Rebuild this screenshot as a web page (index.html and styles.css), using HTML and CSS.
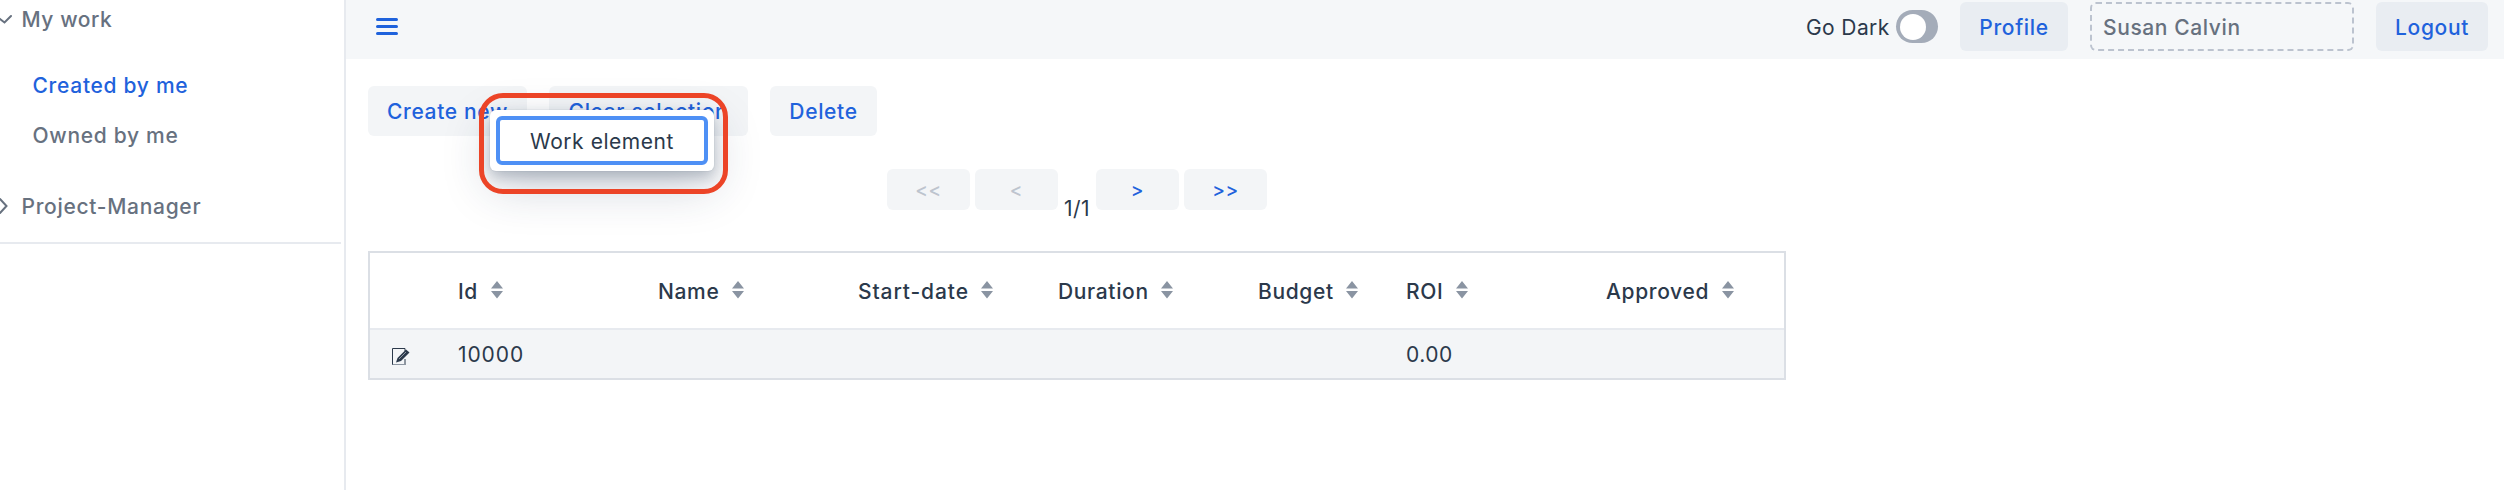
FILE: index.html
```
<!DOCTYPE html>
<html lang="en">
<head>
<meta charset="utf-8">
<title>My work</title>
<link rel="stylesheet" href="styles.css">
</head>
<body>
<div class="app">
  <nav class="drawer">
    <div class="group group-open">
      <svg class="chev" viewBox="0 0 14 20"><path d="M-4 6 L4.5 12.5 L11 6"/></svg>
      <span>My work</span>
    </div>
    <div class="links">
      <a class="link active">Created by me</a>
      <a class="link">Owned by me</a>
    </div>
    <div class="group group-closed">
      <svg class="chev" viewBox="0 0 14 20"><path d="M0 3 L6.5 10 L0 17"/></svg>
      <span>Project-Manager</span>
    </div>
  </nav>
  <div class="main">
    <header class="topbar">
      <svg class="menu-icon" viewBox="0 0 22 17"><path d="M1.5 1.5H20.5M1.5 8.5H20.5M1.5 15.5H20.5"/></svg>
      <div class="session">
        <label class="dark"><span class="dark-text">Go Dark</span><span class="toggle"><span class="knob"></span></span></label>
        <button class="btn top profile">Profile</button>
        <div class="user">Susan Calvin</div>
        <button class="btn top logout">Logout</button>
      </div>
    </header>
    <section class="content">
      <div class="toolbar">
        <button class="btn create">Create new</button>
        <button class="btn clear">Clear selection</button>
        <button class="btn delete">Delete</button>
        <div class="highlight"></div>
        <div class="popup"><div class="item">Work element</div></div>
      </div>
      <div class="pager">
        <button class="btn page off">&lt;&lt;</button>
        <button class="btn page off">&lt;</button>
        <span class="count">1/1</span>
        <button class="btn page">&gt;</button>
        <button class="btn page">&gt;&gt;</button>
      </div>
      <div class="grid">
        <div class="row head">
          <span></span>
          <span class="cell">Id<svg class="sort" viewBox="0 0 12 18"><path d="M0 7.5L6 0L12 7.5ZM0 10L6 17.5L12 10Z"/></svg></span>
          <span class="cell">Name<svg class="sort" viewBox="0 0 12 18"><path d="M0 7.5L6 0L12 7.5ZM0 10L6 17.5L12 10Z"/></svg></span>
          <span class="cell start">Start-date<svg class="sort" viewBox="0 0 12 18"><path d="M0 7.5L6 0L12 7.5ZM0 10L6 17.5L12 10Z"/></svg></span>
          <span class="cell">Duration<svg class="sort" viewBox="0 0 12 18"><path d="M0 7.5L6 0L12 7.5ZM0 10L6 17.5L12 10Z"/></svg></span>
          <span class="cell">Budget<svg class="sort" viewBox="0 0 12 18"><path d="M0 7.5L6 0L12 7.5ZM0 10L6 17.5L12 10Z"/></svg></span>
          <span class="cell">ROI<svg class="sort" viewBox="0 0 12 18"><path d="M0 7.5L6 0L12 7.5ZM0 10L6 17.5L12 10Z"/></svg></span>
          <span class="cell">Approved<svg class="sort" viewBox="0 0 12 18"><path d="M0 7.5L6 0L12 7.5ZM0 10L6 17.5L12 10Z"/></svg></span>
        </div>
        <div class="row body">
          <span class="cell edit"><svg viewBox="0 0 18 18"><path class="sheet" d="M13 11V17M.5 17V.5H13V3"/><path class="sheet-base" d="M.5 16.5H13"/><path class="pencil" d="M4 14.5L5.5 10L14 1.5L17.5 4.5L9 13Z"/><path class="shine" d="M7 11L14 4"/></svg></span>
          <span class="cell id">10000</span>
          <span></span><span></span><span></span><span></span>
          <span class="cell">0.00</span>
          <span></span>
        </div>
      </div>
    </section>
  </div>
</div>
</body>
</html>
```
FILE: styles.css
```
* { box-sizing: border-box; }
body { margin: 0; background: #fff; color: #2b394b; font-family: Inter, "Noto Sans", sans-serif; font-size: 21px; line-height: 30px; letter-spacing: .5px; }
.app { display: flex; height: 490px; overflow: hidden; }
.drawer { width: 346px; flex: none; border-right: 2px solid #e7eaef; color: #67717f; font-weight: 450; letter-spacing: .7px; }
.group { display: flex; align-items: center; gap: 7.5px; }
.group span { padding-top: 2px; }
.group-open { height: 39px; }
.group-open span { padding-top: 1px; letter-spacing: .55px; }
.group-closed { height: 75px; width: 341px; border-bottom: 2px solid #e7eaef; }
.chev { width: 14px; height: 20px; fill: none; stroke: #67717f; stroke-width: 2; stroke-linecap: round; }
.links { height: 130px; padding: 22px 0 0 32.5px; }
.link { display: block; height: 50px; line-height: 50px; }
.link.active { color: #1f62dc; }
.main { flex: 1; min-width: 0; }
.topbar { height: 59px; background: #f5f7f9; display: flex; justify-content: space-between; align-items: flex-start; padding: 2px 16px 0 30px; }
.menu-icon { width: 22px; height: 17px; margin-top: 16px; fill: none; stroke: #1f62dc; stroke-width: 3; stroke-linecap: round; }
.session { display: flex; gap: 22px; align-items: flex-start; }
.dark { display: flex; align-items: center; height: 49px; justify-content: space-between; width: 132px; }
.dark-text { padding-top: 2px; letter-spacing: .4px; }
.toggle { width: 42px; height: 33px; border-radius: 17px; background: #a4acb9; padding: 4px; }
.knob { display: block; width: 26px; height: 26px; border-radius: 50%; background: #fff; }
.btn { height: 50px; border: 0; border-radius: 6px; background: #f3f5f7; color: #1f62dc; font: inherit; font-weight: 500; letter-spacing: .65px; padding: 2px 0 0; }
.top { height: 49px; background: #e9edf2; }
.profile { width: 108px; }
.logout { width: 112px; }
.user { width: 264px; height: 49px; border: 2px dashed #bcc3cf; border-radius: 6px; padding-left: 11px; line-height: 47px; color: #67717f; font-weight: 450; letter-spacing: .6px; }
.content { padding: 27px 22px; }
.toolbar { position: relative; display: flex; gap: 22px; height: 50px; }
.create { width: 159px; }
.clear { width: 199px; }
.delete { width: 107px; }
.highlight { position: absolute; left: 111px; top: 7px; width: 249px; height: 101px; border: 5px solid #ec4427; border-radius: 24px; z-index: 2; }
.popup { position: absolute; left: 122px; top: 24px; width: 224px; height: 61px; padding: 6px; background: #fff; border-radius: 6px; box-shadow: 0 0 0 1px rgba(30,50,80,.04), 0 6px 14px rgba(30,50,80,.25), 0 16px 48px rgba(30,50,80,.22); z-index: 1; }
.item { height: 49px; border: 4px solid #4e90f5; border-radius: 6px; padding-left: 30px; line-height: 43px; letter-spacing: .55px; }
.pager { display: flex; width: 380px; margin: 33px 0 0 519px; height: 41px; gap: 5px; }
.page { width: 83px; height: 41px; flex: none; font-size: 19px; }
.off { color: #bdc4ce; }
.count { width: 28px; flex: none; text-align: center; padding-top: 25px; }
.grid { width: 1418px; margin-top: 41px; border: 2px solid #dbdfe5; }
.row { display: grid; grid-template-columns: 66px 200px 200px 200px 200px 148px 200px 200px; }
.head { height: 77px; border-bottom: 2px solid #e7eaef; font-weight: 470; letter-spacing: .65px; }
.body { height: 48px; background: #f3f5f7; }
.cell { display: flex; align-items: center; padding: 2px 0 0 22px; }
.start { letter-spacing: .9px; }
.id { letter-spacing: .9px; }
.sort { width: 12px; height: 18px; margin: -4px 0 0 12.5px; fill: #8a94a2; }
.edit svg { width: 18px; height: 18px; margin-top: 3px; }
.sheet { fill: none; stroke: #2b394b; }
.sheet-base { fill: none; stroke: #8d96a2; }
.pencil { fill: #2b394b; }
.shine { fill: none; stroke: #8d96a2; }
```
